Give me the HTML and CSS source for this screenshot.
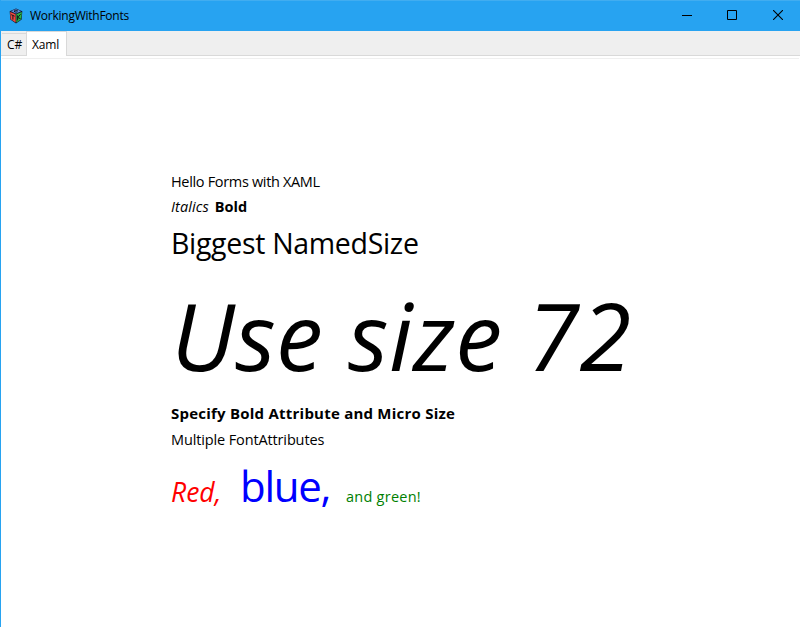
FILE: index.html
```html
<!DOCTYPE html>
<html lang="en">
<head>
<meta charset="utf-8">
<title>WorkingWithFonts</title>
<link rel="stylesheet" href="styles.css">
</head>
<body>
<div class="window">
  <header class="titlebar">
    <svg class="logo" width="14" height="16" viewBox="0 0 14 16">
      <path d="M7 0.5 13.3 3.2 12.7 11.5 7 15.5 1.3 11.5 0.7 3.2Z" fill="#101830"/>
      <path d="M1.2 4 6.6 6.2V14.6L1.8 11.3Z" fill="#f0483e"/>
      <path d="M12.8 4 7.4 6.2V14.6L12.2 11.3Z" fill="#27b944"/>
      <path d="M7 1 12 3.2 7 5.4 2 3.2Z" fill="#5b8fe4"/>
      <path d="M8.7 2.3H6.2L5 3.3 7 4.2 8.6 3.7M2.2 6.7 5.6 8.2M3.9 7.6V11.6M8.6 7.3V12.4M11.6 6.2 8.8 9.5 11.6 10.8" fill="none" stroke="#101820"/>
    </svg>
    <h1 class="title">WorkingWithFonts</h1>
    <div class="controls">
      <svg width="10" height="10" viewBox="0 0 10 10"><path d="M0 5.5H10" stroke="#000"/></svg>
      <svg width="10" height="10" viewBox="0 0 10 10"><path d="M.5.5H9.5V9.5H.5Z" fill="none" stroke="#000"/></svg>
      <svg width="10" height="10" viewBox="0 0 10 10"><path d="M0 0 10 10M10 0 0 10" stroke="#000" stroke-width="1.1"/></svg>
    </div>
  </header>
  <nav class="tabs">
    <span class="tab">C#</span>
    <span class="tab active">Xaml</span>
  </nav>
  <main class="page">
    <p class="hello">Hello Forms with XAML</p>
    <p class="styles"><i>Italics</i><b>Bold</b></p>
    <p class="biggest">Biggest NamedSize</p>
    <p class="huge">Use size 72</p>
    <p class="specify">Specify Bold Attribute and Micro Size</p>
    <p class="multiple">Multiple FontAttributes</p>
    <p class="colors"><span class="red">Red,</span><span class="blue">blue,</span><span class="green">and green!</span></p>
  </main>
</div>
</body>
</html>
```
FILE: styles.css
```css
* { box-sizing: border-box; }
body { margin: 0; font-family: "Open Sans", sans-serif; color: #000; }
.window { height: 627px; background: #fff; border-left: 1px solid #27a3f1; overflow: hidden; }
.titlebar { height: 31px; display: flex; align-items: center; background: #27a3f1; border-top: 1px solid #41adf0; padding: 0 17px 1px 8px; }
.logo { margin-right: 7px; }
.title { margin: 0; font-size: 12px; font-weight: 400; letter-spacing: -.25px; line-height: 20px; }
.controls { margin: 0 0 1px auto; display: flex; }
.controls svg { display: block; margin-left: 36px; }
.controls svg:nth-child(2) { margin-left: 35px; }
.tabs { height: 25px; display: flex; align-items: flex-end; padding-left: 1px; background: #efefef; border-bottom: 1px solid #d9d9d9; }
.tab { width: 24px; height: 22px; border-top: 1px solid #d9d9d9; padding-left: 5px; font-size: 12px; line-height: 22px; white-space: nowrap; }
.tab.active { width: 41px; height: 25px; margin-bottom: -1px; background: #fff; border: 1px solid #d9d9d9; border-bottom: 0; line-height: 26px; letter-spacing: -.15px; }
.page { height: 571px; margin: 2px 1px 0; border-top: 1px solid #efefef; padding: 113px 0 0 169px; }
.page p { margin: 0; white-space: nowrap; line-height: 20px; font-size: 14.5px; }
.page .hello { letter-spacing: -.33px; }
.page .styles { margin-top: 5px; display: flex; gap: 7px; }
.page .styles i { letter-spacing: .1px; }
.page .styles b { margin-left: -1px; }
.page .biggest { margin-top: 6px; font-size: 28.5px; line-height: 40px; letter-spacing: -.32px; }
.page .huge { margin: 7px 0 0; font-size: 94px; line-height: 130px; font-style: italic; letter-spacing: .4px; }
.page .specify { margin-top: 3px; font-weight: 700; font-size: 15px; letter-spacing: .23px; }
.page .multiple { margin-top: 7px; letter-spacing: -.13px; }
.page .colors { display: flex; align-items: baseline; margin-top: 8px; line-height: 56px; }
.red { color: #f00; font-size: 26.5px; font-style: italic; width: 69px; }
.blue { color: #00f; font-size: 42px; letter-spacing: -1.3px; width: 106px; }
.green { color: #008000; letter-spacing: .25px; }
```
